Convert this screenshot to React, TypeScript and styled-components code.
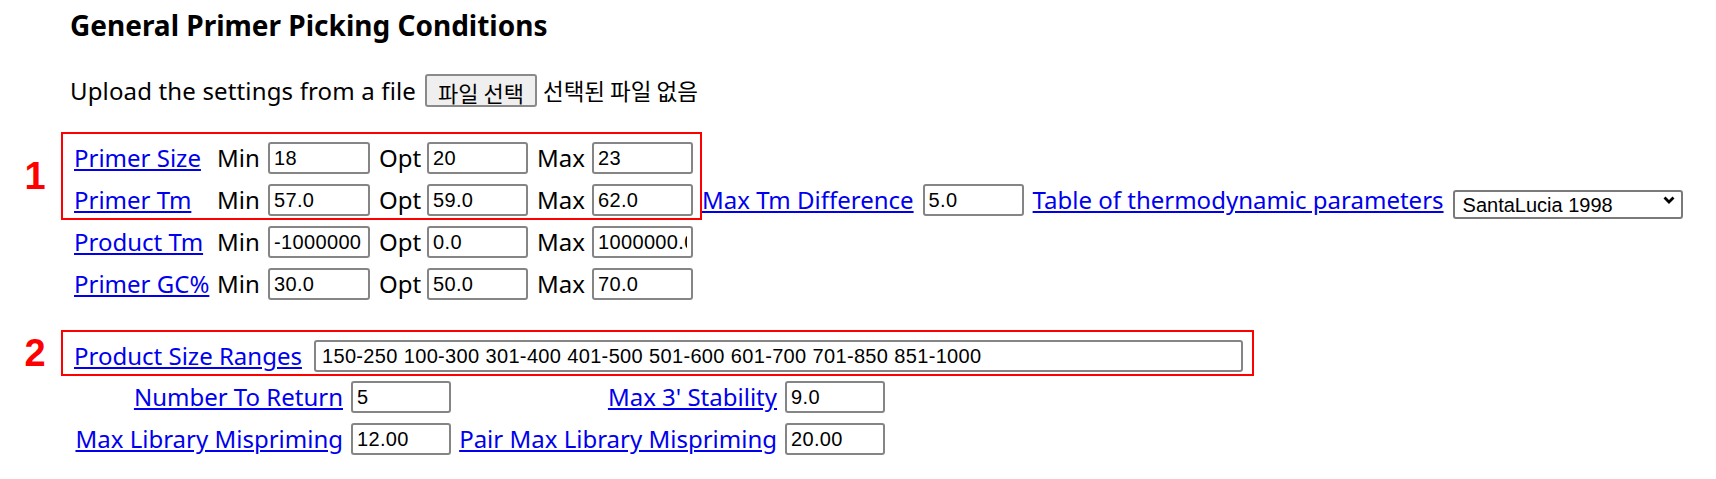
import * as React from 'react';
import styled, { createGlobalStyle } from 'styled-components';

const GlobalStyle = createGlobalStyle`
  body {
    margin: 0;
    background: #fff;
    color: #000;
    font-family: "Noto Sans", "Noto Sans CJK KR", sans-serif;
  }
`;

/** Page wrapper */
const Page = styled.div`
  width: 1716px;
  height: 479px;
  box-sizing: border-box;
  padding: 9px 0 0 70px;
  font-size: 24px;
`;

const Heading = styled.h3`
  margin: 0;
  font-size: 28px;
  line-height: 32px;
  font-weight: bold;
`;

const UploadRow = styled.div`
  display: flex;
  align-items: center;
  height: 34px;
  margin-top: 32px;
  gap: 9px;
`;

const UploadText = styled.span`
  white-space: nowrap;
  letter-spacing: 0.15px;
`;

const FileButton = styled.button`
  height: 33px;
  padding: 0 11px;
  font-family: "Noto Sans CJK KR", sans-serif;
  font-size: 22px;
  background: #efefef;
  border: 2px solid #8a8a8a;
  border-radius: 3px;
  color: #000;
`;

const FileName = styled.span`
  font-family: "Noto Sans CJK KR", sans-serif;
  font-size: 22.5px;
  margin-left: -3px;
`;

const Link = styled.a`
  color: #0000ee;
  text-decoration: underline;
  white-space: nowrap;
  line-height: 32px;
`;

const Text = styled.span`
  white-space: nowrap;
  line-height: 32px;
`;

const Field = styled.input<{ $w?: number }>`
  box-sizing: border-box;
  width: ${(p) => p.$w ?? 102}px;
  height: 32px;
  padding: 0 4px;
  border: 2px solid #858585;
  border-radius: 3px;
  font-family: "Liberation Sans", Arial, sans-serif;
  font-size: 20px;
  letter-spacing: 0.35px;
  color: #000;
  background: #fff;
`;

/** Min / Opt / Max grid */
const RangeGrid = styled.div`
  position: relative;
  display: grid;
  grid-template-columns: 134px 42px 102px 39px 101px 46px 101px auto;
  column-gap: 9px;
  row-gap: 10px;
  align-items: center;
  justify-items: start;
  margin: 35px 0 0 4px;
`;

const Extras = styled.div`
  display: flex;
  align-items: center;
  gap: 9px;
`;

const SelectWrap = styled.div`
  position: relative;
  width: 230px;
  height: 29px;

  svg {
    position: absolute;
    right: 8px;
    top: 10px;
    pointer-events: none;
  }
`;

const Select = styled.select`
  appearance: none;
  box-sizing: border-box;
  width: 100%;
  height: 100%;
  padding: 0 8px;
  border: 2px solid #7a7a7a;
  border-radius: 3px;
  background: #fff;
  font-family: "Liberation Sans", Arial, sans-serif;
  font-size: 20px;
  color: #000;
`;

const SizeRow = styled.div`
  position: relative;
  display: flex;
  align-items: center;
  gap: 12px;
  margin: 40px 0 0 4px;

  input {
    padding-left: 6px;
  }
`;

/** Bottom grid with right aligned labels */
const OptionGrid = styled.div`
  display: grid;
  grid-template-columns: 269px 100px 318px 100px;
  column-gap: 8px;
  row-gap: 10px;
  align-items: center;
  justify-items: end;
  margin: 9px 0 0 4px;

  > input {
    justify-self: start;
  }
`;

/** Red annotation overlay */
const Callout = styled.div<{ $top: number; $left: number; $w: number; $h: number }>`
  position: absolute;
  top: ${(p) => p.$top}px;
  left: ${(p) => p.$left}px;
  width: ${(p) => p.$w}px;
  height: ${(p) => p.$h}px;
  box-sizing: border-box;
  border: 2px solid #ff0000;
  pointer-events: none;
`;

const Marker = styled.span`
  position: absolute;
  left: -43px;
  top: 50%;
  width: 30px;
  transform: translateY(-50%);
  text-align: center;
  color: #ff0000;
  font-family: "Liberation Sans", Arial, sans-serif;
  font-weight: bold;
  font-size: 38px;
  line-height: 40px;
`;

const rangeRows = [
  { label: 'Primer Size', min: '18', opt: '20', max: '23' },
  { label: 'Primer Tm', min: '57.0', opt: '59.0', max: '62.0' },
  { label: 'Product Tm', min: '-1000000', opt: '0.0', max: '1000000.0' },
  { label: 'Primer GC%', min: '30.0', opt: '50.0', max: '70.0' },
];

const Chevron = () => (
  <svg width="12" height="8" viewBox="0 0 12 8">
    <path d="M1.5 1.5 L6 6 L10.5 1.5" fill="none" stroke="#000" strokeWidth="2.8" />
  </svg>
);

const App: React.FC = () => {
  return (
    <Page>
      <GlobalStyle />
      <Heading>General Primer Picking Conditions</Heading>
      <UploadRow>
        <UploadText>Upload the settings from a file</UploadText>
        <FileButton>파일 선택</FileButton>
        <FileName>선택된 파일 없음</FileName>
      </UploadRow>

      <RangeGrid>
        {rangeRows.map((row, i) => (
          <React.Fragment key={row.label}>
            <Link href="#">{row.label}</Link>
            <Text>Min</Text>
            <Field defaultValue={row.min} />
            <Text>Opt</Text>
            <Field $w={101} defaultValue={row.opt} />
            <Text>Max</Text>
            <Field $w={101} defaultValue={row.max} />
            {i === 1 ? (
              <Extras>
                <Link href="#">Max Tm Difference</Link>
                <Field $w={101} defaultValue="5.0" />
                <Link href="#">Table of thermodynamic parameters</Link>
                <SelectWrap>
                  <Select defaultValue="santalucia">
                    <option value="breslauer">Breslauer et al. 1986</option>
                    <option value="santalucia">SantaLucia 1998</option>
                  </Select>
                  <Chevron />
                </SelectWrap>
              </Extras>
            ) : (
              <span />
            )}
          </React.Fragment>
        ))}
        <Callout $top={-10} $left={-13} $w={641} $h={88}>
          <Marker>1</Marker>
        </Callout>
      </RangeGrid>

      <SizeRow>
        <Link href="#">Product Size Ranges</Link>
        <Field $w={929} defaultValue="150-250 100-300 301-400 401-500 501-600 601-700 701-850 851-1000" />
        <Callout $top={-10} $left={-13} $w={1193} $h={46}>
          <Marker>2</Marker>
        </Callout>
      </SizeRow>

      <OptionGrid>
        <Link href="#">Number To Return</Link>
        <Field $w={100} defaultValue="5" />
        <Link href="#">Max 3' Stability</Link>
        <Field $w={100} defaultValue="9.0" />
        <Link href="#">Max Library Mispriming</Link>
        <Field $w={100} defaultValue="12.00" />
        <Link href="#">Pair Max Library Mispriming</Link>
        <Field $w={100} defaultValue="20.00" />
      </OptionGrid>
    </Page>
  );
};

export default App;
